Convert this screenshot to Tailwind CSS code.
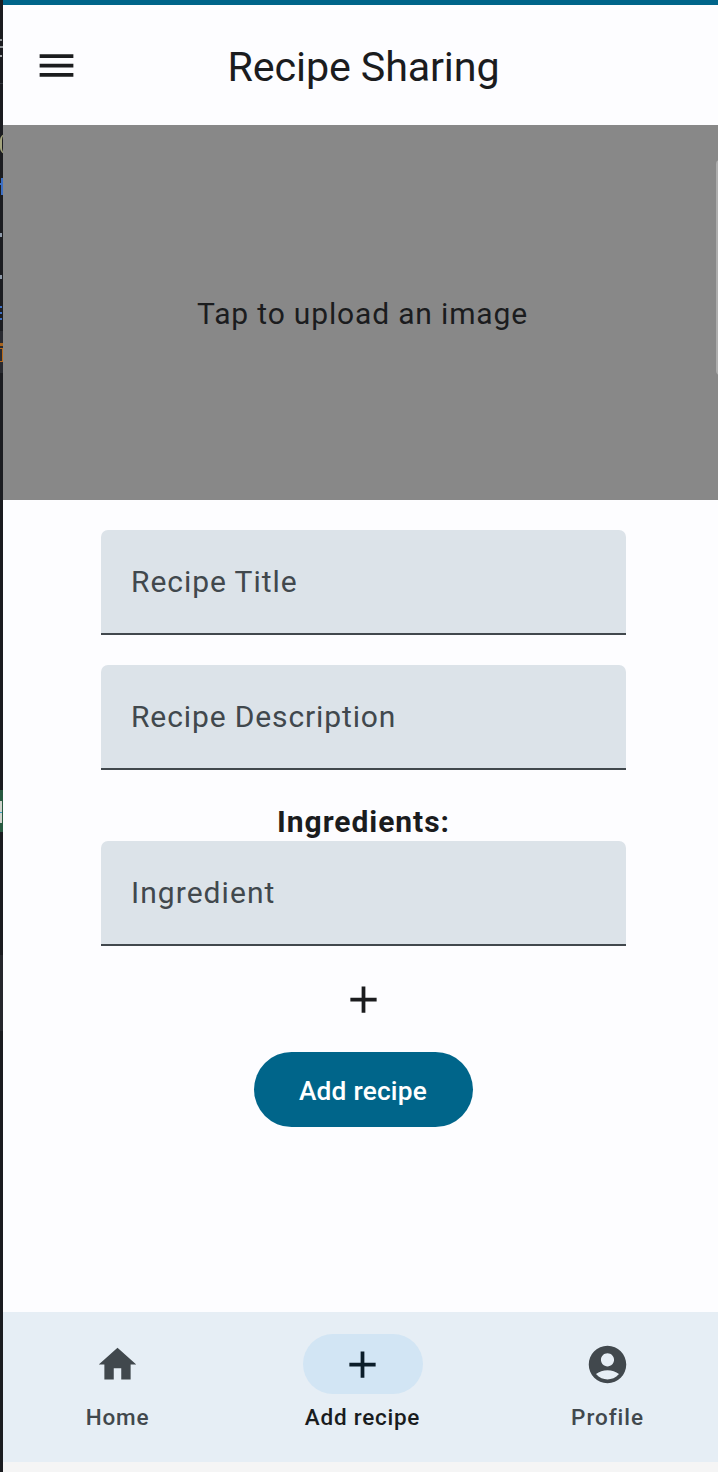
<!DOCTYPE html>
<html lang="en">
<head>
<meta charset="utf-8">
<title>Recipe Sharing</title>
<script src="https://cdn.jsdelivr.net/npm/@tailwindcss/browser@4"></script>
</head>
<body class="w-[718px] h-[1472px] overflow-hidden bg-[#fdfdff] font-['Roboto',sans-serif] text-[#1b1c1e]">
<div class="flex w-[718px] h-[1472px] overflow-hidden">
  <!-- sliver of the editor behind the device -->
  <div class="relative w-[3px] h-full shrink-0 overflow-hidden bg-[#1b1c20]">
    <div class="absolute left-0 top-[39px] w-[2px] h-[2px] bg-[#8f9296]"></div>
    <div class="absolute left-0 top-[46px] w-[3px] h-[2px] bg-[#8f9296]"></div>
    <div class="absolute left-0 top-[55px] w-[2px] h-[2px] bg-[#a2a5a8]"></div>
    <div class="absolute left-0 top-[83px] w-[3px] h-px bg-[#35373c]"></div>
    <div class="absolute left-0 top-[134px] w-[6px] h-[20px] rounded-l-full border-l-2 border-[#a3a37c]"></div>
    <div class="absolute left-[1px] top-[178px] w-[2px] h-[17px] bg-[#3d6fc4]"></div>
    <div class="absolute left-0 top-[183px] w-[3px] h-[2px] bg-[#3d6fc4]"></div>
    <div class="absolute left-0 top-[233px] w-[2px] h-[4px] bg-[#8e99a8]"></div>
    <div class="absolute left-0 top-[275px] w-[2px] h-[4px] bg-[#8e99a8]"></div>
    <div class="absolute left-0 top-[306px] w-[2px] h-[2px] bg-[#3d6fc4]"></div>
    <div class="absolute left-0 top-[312px] w-[2px] h-[2px] bg-[#3d6fc4]"></div>
    <div class="absolute left-0 top-[318px] w-[2px] h-[2px] bg-[#3d6fc4]"></div>
    <div class="absolute left-0 top-[331px] w-[3px] h-[42px] bg-[#292a30]"></div>
    <div class="absolute left-0 top-[343px] w-[3px] h-[3px] bg-[#a9651f]"></div>
    <div class="absolute left-0 top-[348px] w-[3px] h-[14px] border-y border-r border-[#b96b1c]"></div>
    <div class="absolute left-0 top-[790px] w-[3px] h-[42px] bg-[#275940]"></div>
    <div class="absolute left-0 top-[801px] w-[2px] h-[22px] bg-[#d0d3cd]"></div>
    <div class="absolute left-0 top-[812px] w-[2px] h-px bg-[#3a9cc0]"></div>
    <div class="absolute left-0 top-[955px] w-[3px] h-[76px] bg-[#26272c]"></div>
  </div>
  <div class="relative flex flex-col w-[721px] h-full shrink-0">
    <div class="h-[5px] bg-[#00658a] shrink-0"></div>
    <header class="grid grid-cols-[90px_1fr_90px] items-center h-[120px] shrink-0">
      <svg class="ml-[31px] w-[45px] h-[45px]" viewBox="0 0 24 24" fill="currentColor"><path d="M3 18h18v-2H3v2zm0-5h18v-2H3v2zm0-7v2h18V6H3z"/></svg>
      <h1 class="text-center text-[41.25px] leading-[52px] tracking-[-0.14px] whitespace-nowrap pt-[3px]">Recipe Sharing</h1>
    </header>
    <div class="flex items-center justify-center h-[375px] shrink-0 bg-[#888888] pt-[2px] pr-[2px] text-[30px] leading-[45px] tracking-[0.84px]">Tap to upload an image</div>
    <main class="flex flex-col items-center grow pt-[30px]">
      <div class="flex items-center w-[525px] h-[105px] px-[30px] rounded-t-[7px] bg-[#dce3e9] border-b-2 border-[#41484d] text-[#41484d] text-[30px] tracking-[0.94px]">Recipe Title</div>
      <div class="mt-[30px] flex items-center w-[525px] h-[105px] px-[30px] rounded-t-[7px] bg-[#dce3e9] border-b-2 border-[#41484d] text-[#41484d] text-[30px] tracking-[0.88px]">Recipe Description</div>
      <h2 class="mt-[30px] h-[41px] leading-[43px] text-[30px] font-bold tracking-[0.94px]">Ingredients:</h2>
      <div class="flex items-center w-[525px] h-[105px] px-[30px] rounded-t-[7px] bg-[#dce3e9] border-b-2 border-[#41484d] text-[#41484d] text-[30px] tracking-[1.05px]">Ingredient</div>
      <svg class="mt-[31px] w-[45px] h-[45px]" viewBox="0 0 24 24" fill="currentColor"><path d="M19 13h-6v6h-2v-6H5v-2h6V5h2v6h6v2z"/></svg>
      <button class="mt-[30px] w-[219px] h-[75px] rounded-full bg-[#00658a] text-white text-[26.25px] font-medium tracking-[0.22px] pt-[5px] pr-[1px]">Add recipe</button>
    </main>
    <nav class="grid grid-cols-3 gap-[15px] h-[150px] shrink-0 pt-[22px] pr-[1px] bg-[#e6eef5] text-[#41484d] text-[22.5px] leading-[30px] font-medium tracking-[0.94px]">
      <div class="flex flex-col items-center gap-2 pr-[1px]">
        <div class="flex items-center justify-center w-[120px] h-[60px]"><svg class="w-[45px] h-[45px]" viewBox="0 0 24 24" fill="currentColor"><path d="M10 20v-6h4v6h5v-8h3L12 3 2 12h3v8z"/></svg></div>
        <span class="tracking-[0.75px]">Home</span>
      </div>
      <div class="flex flex-col items-center gap-2 text-[#191c1e]">
        <div class="flex items-center justify-center w-[120px] h-[60px] rounded-full bg-[#d2e5f4] pr-[1px] text-[#0b1d29]"><svg class="w-[45px] h-[45px]" viewBox="0 0 24 24" fill="currentColor"><path d="M19 13h-6v6h-2v-6H5v-2h6V5h2v6h6v2z"/></svg></div>
        <span class="tracking-[0.75px] pr-[1px]">Add recipe</span>
      </div>
      <div class="flex flex-col items-center gap-2 pr-[1px]">
        <div class="flex items-center justify-center w-[120px] h-[60px]"><svg class="w-[45px] h-[45px]" viewBox="0 0 24 24" fill="currentColor"><path d="M12 2C6.48 2 2 6.48 2 12s4.480 10 10 10 10-4.480 10-10S17.520 2 12 2zm0 4c1.930 0 3.500 1.570 3.500 3.500S13.930 13 12 13s-3.500-1.570-3.500-3.500S10.070 6 12 6zm0 14c-2.030 0-4.430-.820-6.140-2.880C7.550 15.800 9.680 15 12 15s4.450.800 6.140 2.120C16.430 19.180 14.030 20 12 20z"/></svg></div>
        <span>Profile</span>
      </div>
    </nav>
    <div class="h-[10px] shrink-0 bg-[#f5f5f5]"></div>
    <div class="absolute left-[713px] top-[160px] w-[8px] h-[215px] rounded-[4px] bg-[#adadad]"></div>
  </div>
</div>
</body>
</html>
